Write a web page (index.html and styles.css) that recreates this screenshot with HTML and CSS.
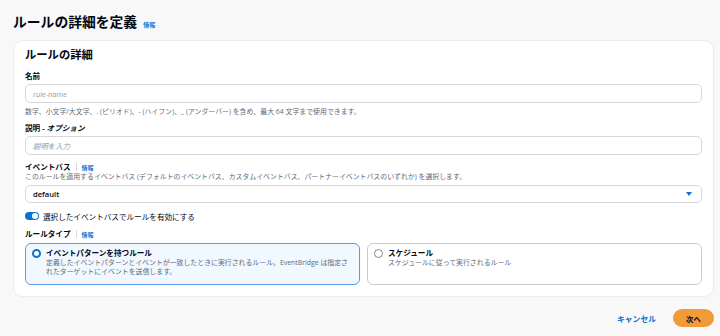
FILE: index.html
```html
<!DOCTYPE html>
<html lang="ja">
<head>
    <meta charset="UTF-8">
    <meta name="viewport" content="width=device-width, initial-scale=1.0">
    <title>ルールの詳細を定義</title>
    <link rel="stylesheet" href="styles.css">
</head>
<body>
    <div class="page">
        <div class="page-header">
            <h1>ルールの詳細を定義</h1>
            <a href="#" class="info">情報</a>
        </div>

        <div class="card">
            <h2>ルールの詳細</h2>

            <div class="field">
                <label class="label">名前</label>
                <input class="input" type="text" placeholder="rule-name">
                <p class="hint">数字、小文字/大文字、. (ピリオド)、- (ハイフン)、_ (アンダーバー) を含め、最大 64 文字まで使用できます。</p>
            </div>

            <div class="field">
                <label class="label">説明 - <i>オプション</i></label>
                <input class="input" type="text" placeholder="説明を入力">
            </div>

            <div class="field">
                <div class="label-row">
                    <span class="label">イベントバス</span>
                    <span class="divider"></span>
                    <a href="#" class="info">情報</a>
                </div>
                <p class="desc">このルールを適用するイベントバス (デフォルトのイベントバス、カスタムイベントバス、パートナーイベントバスのいずれか) を選択します。</p>
                <div class="select">
                    <span>default</span>
                    <span class="caret"></span>
                </div>
            </div>

            <div class="toggle-row">
                <span class="toggle"><span class="knob"></span></span>
                <span>選択したイベントバスでルールを有効にする</span>
            </div>

            <div class="field">
                <div class="label-row">
                    <span class="label">ルールタイプ</span>
                    <span class="divider"></span>
                    <a href="#" class="info">情報</a>
                </div>
                <div class="tiles">
                    <div class="tile selected">
                        <span class="radio"></span>
                        <div>
                            <div class="tile-title">イベントパターンを持つルール</div>
                            <div class="tile-desc">定義したイベントパターンとイベントが一致したときに実行されるルール。EventBridge は指定されたターゲットにイベントを送信します。</div>
                        </div>
                    </div>
                    <div class="tile">
                        <span class="radio"></span>
                        <div>
                            <div class="tile-title">スケジュール</div>
                            <div class="tile-desc">スケジュールに従って実行されるルール</div>
                        </div>
                    </div>
                </div>
            </div>
        </div>

        <div class="actions">
            <a href="#" class="btn-link">キャンセル</a>
            <button class="btn-primary">次へ</button>
        </div>
    </div>
</body>
</html>
```

FILE: styles.css
```css
body {
    font-family: "Open Sans", "Noto Sans CJK JP", sans-serif;
    margin: 0;
    padding: 0;
    background-color: #f8f8f8;
    color: #000716;
}
.page {
    padding: 0 6px 0 13px;
}
.page-header {
    display: flex;
    align-items: baseline;
    gap: 6px;
    padding-top: 14px;
    height: 26px;
}
.page-header h1 {
    margin: 0;
    font-size: 13.8px;
    line-height: 16px;
    font-weight: bold;
}
.info {
    color: #0972d3;
    font-size: 6px;
    font-weight: bold;
    text-decoration: none;
}
.card {
    background-color: white;
    border: 1px solid #ececec;
    border-radius: 10px;
    padding: 7px 11px 11px 11px;
}
.card h2 {
    margin: 0;
    font-size: 11.3px;
    line-height: 14px;
    font-weight: bold;
}
.field {
    display: flex;
    flex-direction: column;
}
.label {
    display: block;
    font-size: 7.6px;
    line-height: 10px;
    font-weight: bold;
}
.field > .label {
    margin-top: 9px;
    margin-bottom: 3px;
}
.field + .field > .label {
    margin-top: 6px;
}
.input {
    height: 19px;
    box-sizing: border-box;
    border: 1px solid #d5d9dd;
    border-radius: 5px;
    padding: 0 7px;
    font-family: inherit;
    font-size: 7.4px;
    outline: none;
}
.input::placeholder {
    color: #8d99a8;
    font-style: italic;
}
.hint {
    margin: 4px 0 0 0;
    font-size: 6.9px;
    line-height: 10px;
    color: #5f6b7a;
}
.label-row {
    display: flex;
    align-items: center;
    gap: 5px;
    margin-top: 7px;
    height: 10px;
}
.divider {
    width: 1px;
    height: 8px;
    background-color: #d5d9dd;
}
.desc {
    margin: 0 0 4px 0;
    font-size: 6.9px;
    line-height: 9px;
    color: #5f6b7a;
}
.select {
    display: flex;
    justify-content: space-between;
    align-items: center;
    height: 18px;
    box-sizing: border-box;
    border: 1px solid #d5d9dd;
    border-radius: 5px;
    padding: 0 9px 0 7px;
    font-size: 7.6px;
    font-weight: 600;
}
.caret {
    width: 0;
    height: 0;
    border-left: 3px solid transparent;
    border-right: 3px solid transparent;
    border-top: 4px solid #0972d3;
}
.toggle-row {
    display: flex;
    align-items: center;
    gap: 4px;
    margin-top: 8px;
    height: 10px;
    font-size: 7.6px;
}
.toggle {
    display: flex;
    justify-content: flex-end;
    align-items: center;
    width: 14px;
    height: 8px;
    box-sizing: border-box;
    padding: 1px;
    border-radius: 4px;
    background-color: #0972d3;
}
.knob {
    width: 6px;
    height: 6px;
    border-radius: 50%;
    background-color: white;
}
.toggle-row + .field .label-row {
    margin-top: 8px;
}
.tiles {
    display: grid;
    grid-template-columns: 1fr 1fr;
    gap: 7px;
    margin-top: 4px;
}
.tile {
    display: flex;
    align-items: flex-start;
    gap: 5px;
    height: 42px;
    box-sizing: border-box;
    border: 1px solid #c6cbd1;
    border-radius: 6px;
    padding: 4px 8px 0 6px;
}
.tile.selected {
    border-color: #5a9ae8;
    background-color: #f1f8ff;
}
.radio {
    flex: none;
    width: 9px;
    height: 9px;
    box-sizing: border-box;
    margin-top: 0.5px;
    border: 1px solid #7d8998;
    border-radius: 50%;
    background-color: white;
}
.tile.selected .radio {
    border: 2.5px solid #0972d3;
}
.tile-title {
    font-size: 7.6px;
    line-height: 10px;
    font-weight: bold;
}
.tile-desc {
    font-size: 6.9px;
    line-height: 9px;
    color: #5f6b7a;
}
.actions {
    display: flex;
    justify-content: flex-end;
    align-items: center;
    gap: 17px;
    margin-top: 12px;
}
.btn-link {
    color: #0972d3;
    font-size: 7.8px;
    font-weight: bold;
    text-decoration: none;
}
.btn-primary {
    width: 41px;
    height: 18px;
    border: none;
    border-radius: 9px;
    background-color: #f19b38;
    color: #000716;
    font-family: inherit;
    font-size: 7.4px;
    font-weight: bold;
    padding: 0;
}
```
